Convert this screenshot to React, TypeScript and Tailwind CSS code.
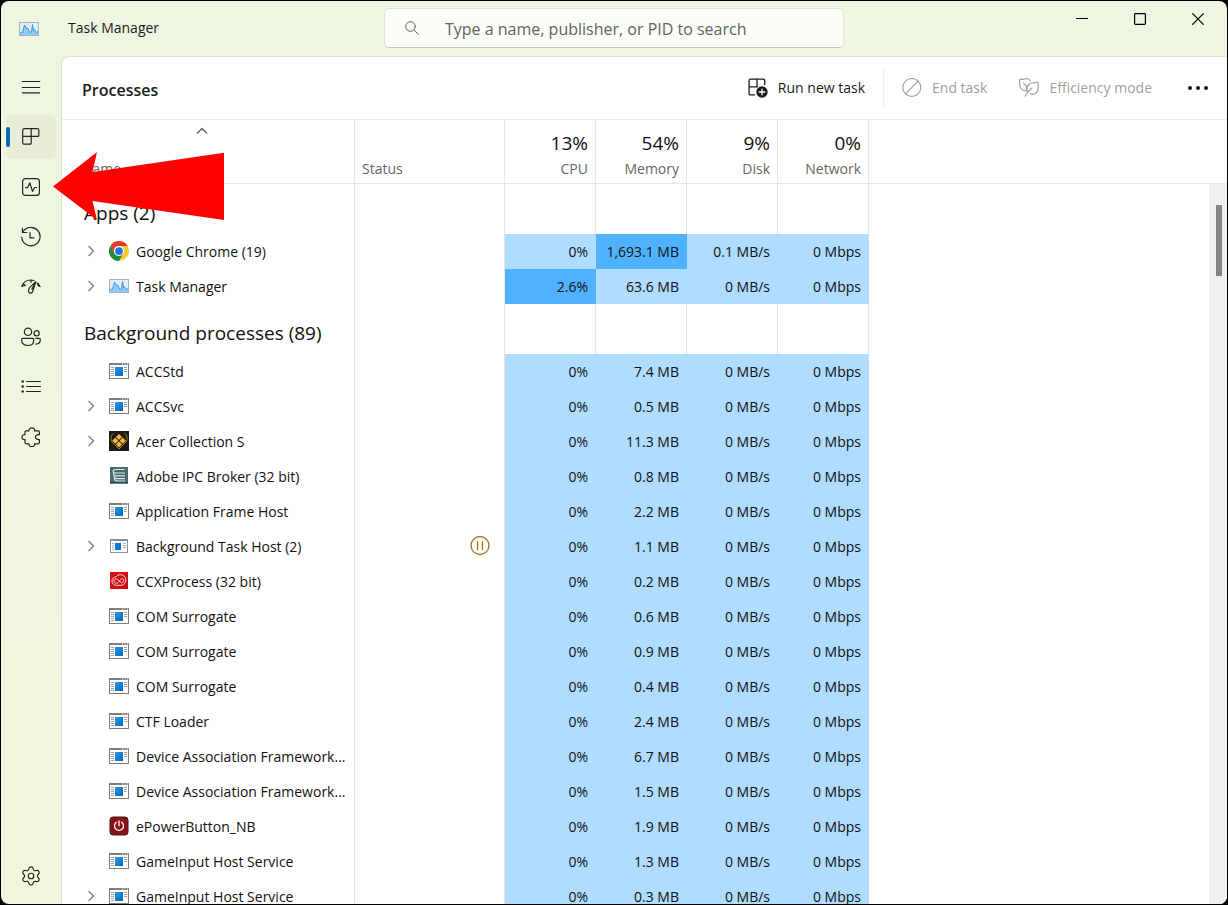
import React from "react";
import { Settings } from "lucide-react";

type IconProps = { className?: string };

const stroke = {
  fill: "none",
  stroke: "currentColor",
  strokeWidth: 1.2,
  strokeLinecap: "round" as const,
  strokeLinejoin: "round" as const,
};

function MenuIcon() {
  return (
    <svg viewBox="0 0 20 20" className="size-5" {...stroke}>
      <path d="M1.3 4.5h17.4M1.3 10.5h17.4M1.3 15.8h17.4" />
    </svg>
  );
}

function ProcessesIcon() {
  return (
    <svg viewBox="0 0 20 20" className="size-5" {...stroke}>
      <path d="M3.2 1.7h13.4a1.2 1.2 0 0 1 1.2 1.2v5.3a1.2 1.2 0 0 1-1.2 1.2H1.7M10.2 1.7v14.2a1.2 1.2 0 0 1-1.2 1.2H2.9a1.2 1.2 0 0 1-1.2-1.2V3.1a1.4 1.4 0 0 1 1.5-1.4" />
    </svg>
  );
}

function PerformanceIcon() {
  return (
    <svg viewBox="0 0 20 20" className="size-5" {...stroke}>
      <rect x="1.6" y="1.6" width="16.8" height="16.8" rx="3" />
      <path d="M4.6 10.6h2.1l2.1-4.8 2.7 8.6 2-3.9h2" />
    </svg>
  );
}

function HistoryIcon() {
  return (
    <svg viewBox="0 0 20 20" className="size-5" {...stroke}>
      <path d="M1.4 1.2v4.3h4.5M1.7 5.3a9.2 9.2 0 1 1-1 4.9M9 5.6v5.2h4" />
    </svg>
  );
}

function StartupIcon() {
  return (
    <svg viewBox="0 0 20 20" className="size-5" {...stroke}>
      <path d="M.9 9.3C2.3 5.2 5.6 3 9.500 3c1.300 0 2.400.2 3.500.7M.7 9.400l3.300-1M1.900 6.800l2.400 1.400M10 3.200v2.200M16 6c1.400 1 2.400 2.200 3.100 3.700L16.600 8M16.600 8l1-1.300" />
      <path d="M14.800 4.800 9.600 9.600c-1.900 1.900-2.400 4.300-1.600 5.800 1 1.600 3 .8 3.700-1.200zM14.800 4.800l-4 7.400" />
    </svg>
  );
}

function UsersIcon() {
  return (
    <svg viewBox="0 0 20 20" className="size-5" {...stroke}>
      <circle cx="7" cy="4.800" r="3.700" />
      <circle cx="15.600" cy="6.200" r="2.600" />
      <path d="M1.900 11.300h9.600a1.200 1.200 0 0 1 1.200 1.200v.9c0 3-2.300 5.100-6 5.100s-6-2.100-6-5.100v-.9a1.200 1.200 0 0 1 1.200-1.200zM14.800 11.300h3.300a1.200 1.200 0 0 1 1.200 1.200c0 2.800-1.700 4.600-4.600 4.600" />
    </svg>
  );
}

function DetailsIcon() {
  return (
    <svg viewBox="0 0 20 20" className="size-5" {...stroke}>
      <path d="M5.600 4.500h13.800M5.600 9.500h13.800M5.600 14.500h13.800" />
      <g fill="currentColor" stroke="none">
        <circle cx="1.700" cy="4.500" r="1.200" />
        <circle cx="1.700" cy="9.500" r="1.200" />
        <circle cx="1.700" cy="14.500" r="1.200" />
      </g>
    </svg>
  );
}

function ServicesIcon() {
  return (
    <svg viewBox="0 0 20 20" className="size-5" {...stroke}>
      <path d="M8 3.800C7.800 1.800 9 .8 10.800.8s3 1 2.800 3h3.600a1.200 1.200 0 0 1 1.200 1.200v2.600c-2.400-.2-4 .8-4 2.500s1.600 2.700 4 2.500v3a1.200 1.200 0 0 1-1.200 1.200h-3.600c.2 1.900-1 2.800-2.800 2.800s-3-.9-2.800-2.800H5.200A1.200 1.200 0 0 1 4 15.600v-2.900c-2 .2-3-.9-3-2.600s1-2.700 3-2.500V5a1.200 1.200 0 0 1 1.200-1.200z" />
    </svg>
  );
}

function SearchIcon() {
  return (
    <svg viewBox="0 0 14 14" className="size-[14px]" {...stroke} strokeWidth={1}>
      <circle cx="5.500" cy="5.500" r="4.800" />
      <path d="m9.200 9.200 4.200 4.200" />
    </svg>
  );
}

function RunTaskIcon() {
  return (
    <svg viewBox="0 0 20 20" className="size-5" {...stroke} strokeWidth={1.300}>
      <path d="M6.500 16.900H2.300a1.200 1.200 0 0 1-1.200-1.200V2.400a1.200 1.200 0 0 1 1.200-1.200h13.200a1.200 1.200 0 0 1 1.200 1.200v4.200M1.100 8.800h8.500M9 1.200v7.600" />
      <circle cx="14" cy="14" r="5.700" fill="currentColor" stroke="none" />
      <path d="M14 11.200v5.600M11.200 14h5.600" stroke="white" />
    </svg>
  );
}

function EndTaskIcon() {
  return (
    <svg viewBox="0 0 20 20" className="size-5" {...stroke}>
      <circle cx="9.800" cy="9.500" r="9" />
      <path d="M3.500 15.800 16.100 3.200" />
    </svg>
  );
}

function LeafIcon() {
  return (
    <svg viewBox="0 0 20 20" className="size-5" {...stroke}>
      <path d="M6.900 13C3.200 12.500.7 10 .7 6.300V2.200c0-.9.5-1.300 1.300-1.100 1.600.4 2.600.3 4-.1 2.300-.7 4.500.3 5.400 2.200M4.500 5.200l3 3.100v4.500M7.500 8.500l2.600-1" />
      <path d="M8.300 13.600c-1.400-3.200.2-8 4.400-8.600 2-.3 3.300 0 5-.8.900-.4 1.500 0 1.500.9v4.800c0 4.700-4.300 7.700-8 5.700M6 18.200c1.700-3.300 4-5.900 7-8.200" />
    </svg>
  );
}

function MoreIcon() {
  return (
    <svg viewBox="0 0 20 20" className="size-5" fill="currentColor">
      <circle cx="2" cy="10" r="2" />
      <circle cx="10" cy="10" r="2" />
      <circle cx="18" cy="10" r="2" />
    </svg>
  );
}

function ChevronIcon({ className = "" }: IconProps) {
  return (
    <svg viewBox="0 0 12 12" className={"size-3 " + className} {...stroke} strokeWidth={1.500}>
      <path d="m4 1.500 4.500 4.500L4 10.500" />
    </svg>
  );
}

function TaskManagerLogo() {
  return (
    <svg viewBox="0 0 20 14" className="h-[14px] w-5">
      <rect x=".5" y=".5" width="19" height="13" fill="#e4eef7" stroke="#a3b2c0" />
      <path d="M1 11.500 2.500 10 3.500 10.500 5.500 3 7.500 6.500 8.500 6 11 10.500 12.500 10 13.500 2.500 14.500 8.500 15.500 7.500 17 10.500 19 9.500V13H1z" fill="#8ccdf7" />
      <path d="M1 11.500 2.500 10 3.500 10.500 5.500 3 7.500 6.500 8.500 6 11 10.500 12.500 10 13.500 2.500 14.500 8.500 15.500 7.500 17 10.500 19 9.500" fill="none" stroke="#2b8fe0" strokeWidth=".9" />
    </svg>
  );
}

function ChromeLogo() {
  return (
    <svg viewBox="0 0 48 48" className="size-5">
      <circle cx="24" cy="24" r="24" fill="#fcc934" />
      <path d="M3.200 12A24 24 0 0 1 44.800 12H24a12 12 0 0 0-10.400 18z" fill="#e33b2e" />
      <path d="M3.200 12A24 24 0 0 0 24 48l10.400-18A12 12 0 0 1 13.600 30z" fill="#1e8e3e" />
      <circle cx="24" cy="24" r="12" fill="white" />
      <circle cx="24" cy="24" r="9.300" fill="#1a73e8" />
    </svg>
  );
}

function WindowLogo() {
  return (
    <svg viewBox="0 0 20 16" className="h-4 w-5">
      <defs>
        <linearGradient id="windowBlue" x1="0" y1="0" x2="1" y2="1">
          <stop offset="0" stopColor="#2a9bea" />
          <stop offset="1" stopColor="#0567b8" />
        </linearGradient>
      </defs>
      <rect x=".5" y=".5" width="19" height="15" fill="white" stroke="#7d7d7d" />
      <path d="M0 0h20v2H0z" fill="#7d7d7d" />
      <path d="M13 1h1M15.500 1h1M18 1h1" stroke="white" />
      <path d="M2 4.500h3M2 6.500h3M2 8.500h3M2 10.500h3M2 12.500h3M15 4.500h3M15 6.500h3M15 8.500h3" stroke="#a0a0a0" />
      <path d="M6 4h8v9H6z" fill="url(#windowBlue)" />
    </svg>
  );
}

function SmallWindowLogo() {
  return (
    <svg viewBox="0 0 20 16" className="h-4 w-5">
      <rect x="1.500" y="1.500" width="17" height="13" fill="white" stroke="#8d8d8d" />
      <path d="M1 1h18v2H1z" fill="#8d8d8d" />
      <path d="M3 5.500h2M3 7.500h2M3 9.500h2M3 11.500h2M14 5.500h3M14 7.500h3M14 9.500h3" stroke="#9cb4c8" />
      <path d="M6 5h6v7H6z" fill="#0b78d4" />
    </svg>
  );
}

function AcerLogo() {
  return (
    <svg viewBox="0 0 20 20" className="size-5">
      <path d="M0 0h20v20H0z" fill="#1b1a14" />
      <path d="M10 18 3 11C1 8 2 4 4.500 2.500M10 18l7-7c2-3 1-7-1.500-8.500" fill="none" stroke="#a97b22" strokeWidth="1" />
      <path d="m10 2.900 3.100 3.100L10 9.100 6.900 6zM6.300 6.600l3.100 3.100-3.100 3.100-3.100-3.100zM13.700 6.600l3.100 3.100-3.100 3.100-3.100-3.100zM10 10.300l3.100 3.100-3.100 3.100-3.100-3.100z" fill="#efb540" />
    </svg>
  );
}

function AdobeIpcLogo() {
  return (
    <svg viewBox="0 0 20 20" className="size-5">
      <path d="M1 1h18v16.500H1z" fill="#47696f" />
      <path d="M1 16h18v1.500H1z" fill="#2f4b50" />
      <path d="M4 4.500 6 3.500h9.500M4 4.500l2 9.500 2 1h8M5 6.800l2 .2h9M5.500 9.500l2 .4h8.500M6 12l2 .6h8" fill="none" stroke="#dcebea" strokeWidth="1.200" />
    </svg>
  );
}

function CreativeCloudLogo() {
  return (
    <svg viewBox="0 0 20 20" className="size-5">
      <path d="M1 1h18v17H1z" fill="#d01015" />
      <path d="M7.500 14.300c-3 0-4.500-1.900-4.500-4.300 0-2.300 1.700-4 4-4.100C8 4.500 9.500 3.700 11.300 3.700c3.200 0 5.500 2.300 5.500 5.200 0 3.100-2.200 5.400-5 5.400zM12.500 11.800 8.300 8.300C6.700 7.200 5 8.300 5 10c0 2.400 3.200 2.900 4.500 1.200l2-2.700c1.300-1.600 3.500-.6 3.200 1.300-.2 1.200-1.200 1.900-2.200 2" fill="none" stroke="#ffd3d3" strokeWidth="1" />
    </svg>
  );
}

function PowerLogo() {
  return (
    <svg viewBox="0 0 20 20" className="size-5">
      <rect x="1" y="1" width="18" height="18" rx="3" fill="#8c1014" stroke="#3c1a1a" />
      <path d="M7.300 6.300a4.500 4.500 0 1 0 5.400 0M10 4.800v5" fill="none" stroke="white" strokeWidth="1.300" strokeLinecap="round" />
    </svg>
  );
}

function PausedIcon() {
  return (
    <svg viewBox="0 0 20 20" role="img" aria-label="Suspended" className="size-5 text-[#a4711d]" {...stroke} strokeWidth={1.300}>
      <circle cx="10" cy="9.500" r="9" />
      <path d="M7.600 6v7.500M12.400 6v7.500" />
    </svg>
  );
}

type Process = {
  name: string;
  icon?: React.ComponentType;
  expandable?: boolean;
  suspended?: boolean;
  cpu?: string;
  memory: string;
  disk?: string;
  hot?: "cpu" | "memory";
};

const groups: { title: string; items: Process[] }[] = [
  {
    title: "Apps (2)",
    items: [
      { name: "Google Chrome (19)", icon: ChromeLogo, expandable: true, memory: "1,693.1 MB", disk: "0.1 MB/s", hot: "memory" },
      { name: "Task Manager", icon: TaskManagerLogo, expandable: true, cpu: "2.6%", memory: "63.6 MB", hot: "cpu" },
    ],
  },
  {
    title: "Background processes (89)",
    items: [
      { name: "ACCStd", memory: "7.4 MB" },
      { name: "ACCSvc", expandable: true, memory: "0.5 MB" },
      { name: "Acer Collection S", icon: AcerLogo, expandable: true, memory: "11.3 MB" },
      { name: "Adobe IPC Broker (32 bit)", icon: AdobeIpcLogo, memory: "0.8 MB" },
      { name: "Application Frame Host", memory: "2.2 MB" },
      { name: "Background Task Host (2)", icon: SmallWindowLogo, expandable: true, suspended: true, memory: "1.1 MB" },
      { name: "CCXProcess (32 bit)", icon: CreativeCloudLogo, memory: "0.2 MB" },
      { name: "COM Surrogate", memory: "0.6 MB" },
      { name: "COM Surrogate", memory: "0.9 MB" },
      { name: "COM Surrogate", memory: "0.4 MB" },
      { name: "CTF Loader", memory: "2.4 MB" },
      { name: "Device Association Framework...", memory: "6.7 MB" },
      { name: "Device Association Framework...", memory: "1.5 MB" },
      { name: "ePowerButton_NB", icon: PowerLogo, memory: "1.9 MB" },
      { name: "GameInput Host Service", memory: "1.3 MB" },
      { name: "GameInput Host Service", expandable: true, memory: "0.3 MB" },
    ],
  },
];

const navItems = [
  { label: "Processes", icon: ProcessesIcon, active: true },
  { label: "Performance", icon: PerformanceIcon },
  { label: "App history", icon: HistoryIcon },
  { label: "Startup apps", icon: StartupIcon },
  { label: "Users", icon: UsersIcon },
  { label: "Details", icon: DetailsIcon },
  { label: "Services", icon: ServicesIcon },
];

const usage = [
  { label: "CPU", value: "13%" },
  { label: "Memory", value: "54%" },
  { label: "Disk", value: "9%" },
  { label: "Network", value: "0%" },
];

function TitleBar() {
  return (
    <header className="grid h-[55px] shrink-0 grid-cols-[1fr_460px_1fr]">
      <div className="flex items-center gap-[29px] pl-[18px]">
        <TaskManagerLogo />
        <h1 className="pb-0.5 text-[14px] leading-5 text-[#1b1b1b]">Task Manager</h1>
      </div>
      <label className="mt-[7px] flex h-10 items-center gap-[26px] rounded-[5px] border border-[#dfe5d6] border-b-[#c3c8bb] bg-[#fbfef8] pl-5 text-[#5f635c]">
        <SearchIcon />
        <input
          type="search"
          aria-label="Search processes"
          placeholder="Type a name, publisher, or PID to search"
          className="min-w-0 flex-1 bg-transparent pt-0.5 text-[16px] leading-6 outline-none placeholder:text-[#5f635c]"
        />
      </label>
      <div className="flex h-9 justify-end text-black">
        <button type="button" aria-label="Minimize" className="grid w-[58px] place-items-center">
          <svg viewBox="0 0 12 12" className="size-3" stroke="currentColor">
            <path d="M0 5.500h12" />
          </svg>
        </button>
        <button type="button" aria-label="Maximize" className="grid w-[58px] place-items-center">
          <svg viewBox="0 0 12 12" className="size-3" fill="none" stroke="currentColor" strokeWidth="1.200">
            <rect x=".6" y=".6" width="10.800" height="10.800" rx=".8" />
          </svg>
        </button>
        <button type="button" aria-label="Close" className="grid w-[58px] place-items-center">
          <svg viewBox="0 0 12 12" className="size-3" stroke="currentColor" strokeWidth="1.200">
            <path d="m.3.300 11.400 11.400M11.700.3.300 11.700" />
          </svg>
        </button>
      </div>
    </header>
  );
}

function Sidebar() {
  return (
    <nav aria-label="Views" className="flex w-[60px] shrink-0 flex-col gap-1.5 px-[5px] pt-[9px] pb-1.5 text-[#242622]">
      <button type="button" aria-label="Open navigation" className="grid h-11 place-items-center">
        <MenuIcon />
      </button>
      {navItems.map(({ label, icon: Icon, active }) => (
        <button
          key={label}
          type="button"
          aria-label={label}
          className={
            active
              ? "relative grid h-11 place-items-center rounded-[5px] bg-[#e8edda]"
              : "grid h-11 place-items-center"
          }
        >
          {active && <span className="absolute top-3 left-0 h-5 w-1 rounded-full bg-[#0a66b7]" />}
          <Icon />
        </button>
      ))}
      <button type="button" aria-label="Settings" className="mt-auto grid h-11 place-items-center">
        <Settings size={22} strokeWidth={1.3} />
      </button>
    </nav>
  );
}

function Toolbar() {
  return (
    <div className="flex h-[63px] shrink-0 items-center border-b border-[#ececec] pr-[9px] pl-5">
      <h2 className="mt-1 flex-1 text-[16px] leading-6 font-semibold text-[#1b1b1b]">Processes</h2>
      <div className="flex h-10 items-center text-[14px] leading-5 text-[#1b1b1b]">
        <button type="button" className="flex items-center gap-[10px] pr-[18px]">
          <RunTaskIcon />
          Run new task
        </button>
        <span className="h-10 w-px bg-[#ececec]" />
        <button type="button" disabled className="flex items-center gap-[10px] pr-4 pl-[18px] text-[#a0a0a0]">
          <EndTaskIcon />
          End task
        </button>
        <button type="button" disabled className="flex items-center gap-[10px] pr-[18px] pl-4 text-[#a0a0a0]">
          <LeafIcon />
          Efficiency mode
        </button>
        <button type="button" aria-label="More options" className="ml-2 grid h-10 w-10 place-items-center">
          <MoreIcon />
        </button>
      </div>
    </div>
  );
}

function ProcessRow({ process }: { process: Process }) {
  const Icon = process.icon ?? WindowLogo;
  const cool = "bg-[#b0dcff] py-0 pr-2 text-right";
  const hot = "bg-[#50b1ff] py-0 pr-2 text-right";
  return (
    <tr className="h-[35px]">
      <td className="border-r border-[#e6e6e6] p-0">
        <div className="flex items-center pl-[23px]">
          {process.expandable ? (
            <button type="button" aria-label={"Expand " + process.name} className="mr-3 pb-0.5 text-[#858585]">
              <ChevronIcon className="block" />
            </button>
          ) : (
            <span className="mr-3 w-3" />
          )}
          <span className="flex w-5 shrink-0 pb-0.5">
            <Icon />
          </span>
          <span className="ml-[7px] whitespace-nowrap">{process.name}</span>
        </div>
      </td>
      <td className="border-r border-[#e6e6e6] p-0">
        {process.suspended && (
          <div className="flex justify-end pr-[14px] pb-0.5">
            <PausedIcon />
          </div>
        )}
      </td>
      <td className={process.hot === "cpu" ? hot : cool}>{process.cpu ?? "0%"}</td>
      <td className={process.hot === "memory" ? hot : cool}>{process.memory}</td>
      <td className={cool}>{process.disk ?? "0 MB/s"}</td>
      <td className={cool}>0 Mbps</td>
      <td />
    </tr>
  );
}

function ProcessTable() {
  return (
    <div className="relative min-h-0 flex-1 overflow-hidden">
      <table className="w-full table-fixed border-separate border-spacing-0 text-[14px] leading-5 text-[#111]">
        <colgroup>
          <col className="w-[293px]" />
          <col className="w-[150px]" />
          <col className="w-[91px]" />
          <col className="w-[91px]" />
          <col className="w-[91px]" />
          <col className="w-[91px]" />
          <col />
        </colgroup>
        <thead>
          <tr className="h-16 text-[#666]">
            <th className="border-r border-b border-[#e6e6e6] px-5 pt-1 pb-1 text-left align-bottom font-normal">
              <span className="flex flex-col gap-[22px]">
                <ChevronIcon className="ml-[114px] -rotate-90" />
                <span>Name</span>
              </span>
            </th>
            <th className="border-r border-b border-[#e6e6e6] px-[7px] pt-0 pb-1 text-left align-bottom font-normal">Status</th>
            {usage.map((u) => (
              <th key={u.label} className="border-r border-b border-[#e6e6e6] px-[7px] pt-0 pb-1 text-right align-bottom font-normal">
                <span className="block text-[19px] leading-8 text-[#111]">{u.value}</span>
                <span className="block">{u.label}</span>
              </th>
            ))}
            <th className="border-b border-[#e6e6e6]" />
          </tr>
        </thead>
        {groups.map((group) => (
          <tbody key={group.title}>
            <tr className="h-[50px]">
              <th scope="rowgroup" className="border-r border-[#e6e6e6] py-0 pt-2 pl-[22px] text-left text-[19px] leading-7 font-normal whitespace-nowrap">
                {group.title}
              </th>
              <td className="border-r border-[#e6e6e6]" />
              <td className="border-r border-[#e6e6e6]" />
              <td className="border-r border-[#e6e6e6]" />
              <td className="border-r border-[#e6e6e6]" />
              <td className="border-r border-[#e6e6e6]" />
              <td />
            </tr>
            {group.items.map((process, i) => (
              <ProcessRow key={i} process={process} />
            ))}
          </tbody>
        ))}
      </table>
      <div className="absolute top-16 right-0 bottom-0 w-[18px] bg-[#f0f0f0] pt-[21px] pl-[7px]">
        <div className="h-[71px] w-1.5 bg-[#858585]" />
      </div>
    </div>
  );
}

function PointerArrow() {
  return (
    <svg viewBox="0 0 172 68" className="pointer-events-none absolute top-[152px] left-[53px] h-[68px] w-[172px]" aria-hidden="true">
      <path d="M0 34.500 44 0l-4.500 20L171 .7V68L39.500 49 44 68z" fill="#ff0000" />
    </svg>
  );
}

export default function App() {
  return (
    <div className="relative h-screen overflow-hidden bg-black p-px font-['Open_Sans','Noto_Sans',sans-serif]">
      <div className="flex h-full flex-col overflow-hidden rounded-lg bg-linear-to-b from-[#eef6e2] to-[#f2f6dc]">
        <TitleBar />
        <div className="flex min-h-0 flex-1">
          <Sidebar />
          <main className="flex min-w-0 flex-1 flex-col overflow-hidden rounded-tl-lg border-t border-l border-[#dce3cf] bg-white">
            <Toolbar />
            <ProcessTable />
          </main>
        </div>
      </div>
      <PointerArrow />
    </div>
  );
}
